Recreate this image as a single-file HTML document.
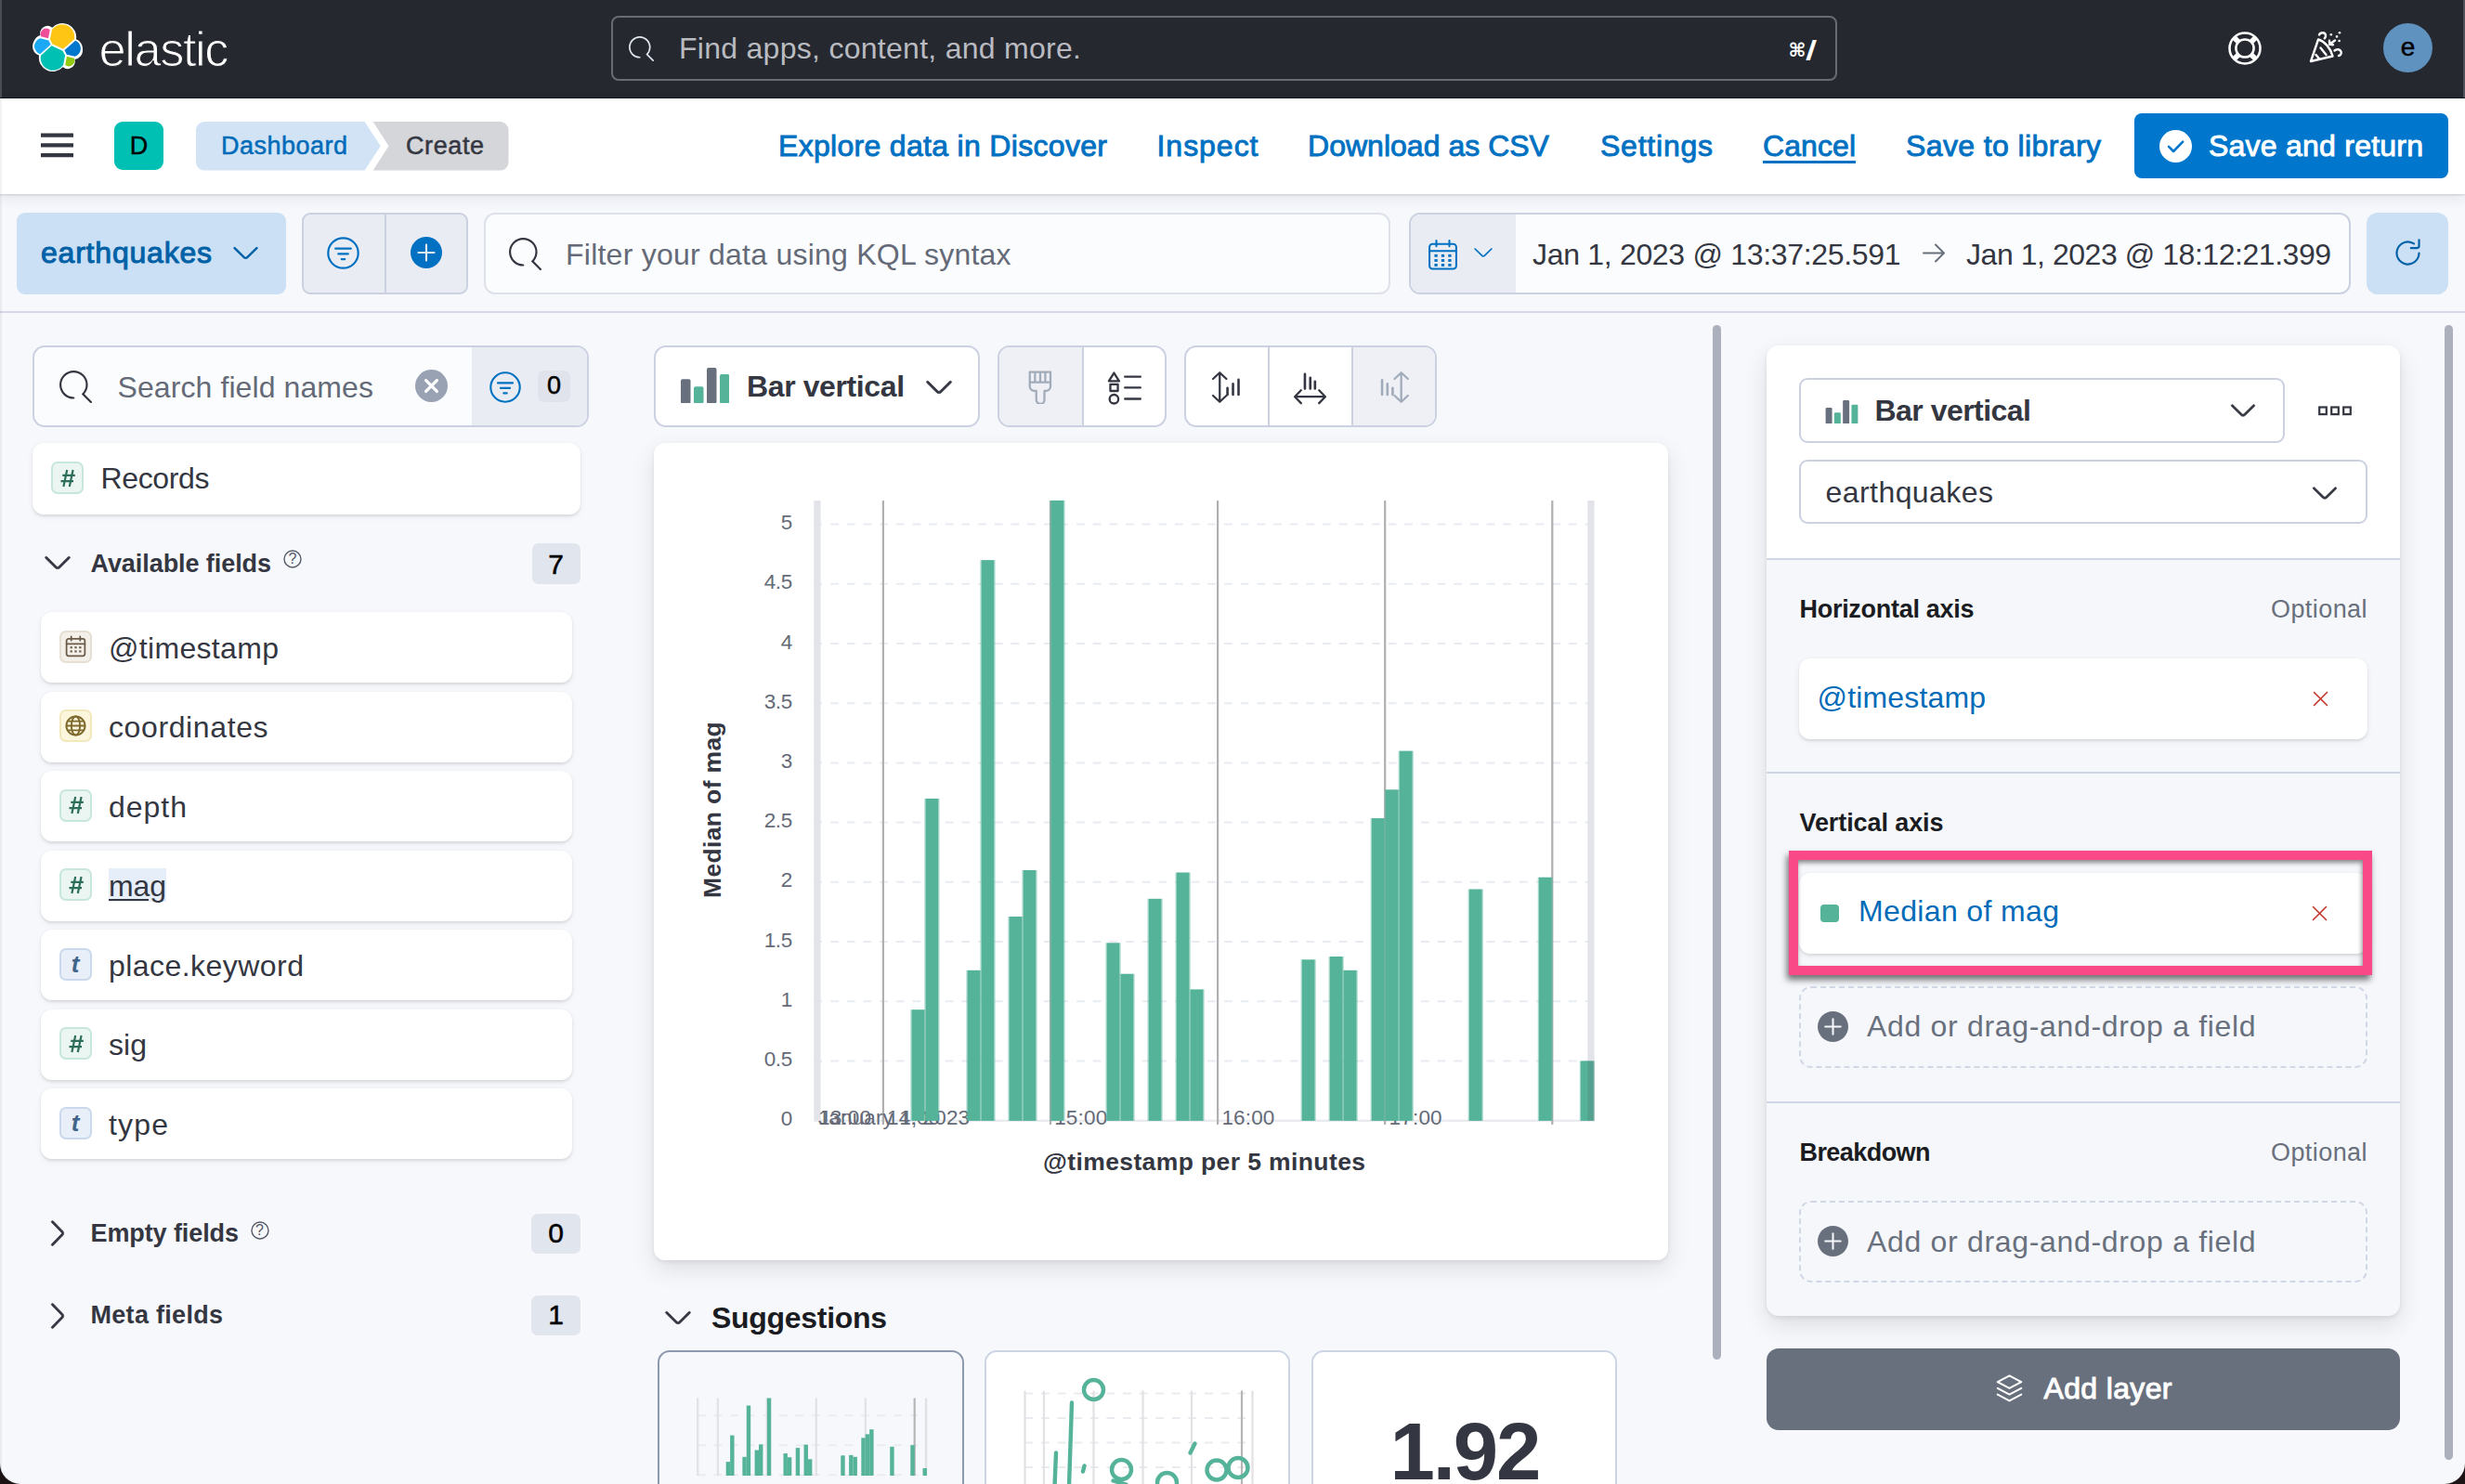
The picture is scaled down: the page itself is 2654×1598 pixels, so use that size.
<!DOCTYPE html>
<html lang="en"><head><meta charset="utf-8"><title>Lens - Elastic</title>
<style>
html,body{margin:0;padding:0;background:#1d1416;}
body{width:2654px;height:1598px;overflow:hidden;position:relative;font-family:"Liberation Sans",sans-serif;}
#app{position:absolute;left:0;top:0;width:2654px;height:1598px;overflow:hidden;background:#f7f8fc;border-radius:0 0 22px 22px;}
#app div,#app svg,#app span.t{position:absolute;box-sizing:border-box;}
span.t{white-space:pre;line-height:1;}
.card{background:#fff;border-radius:12px;box-shadow:0 2px 4px rgba(0,0,0,.07),0 4px 10px rgba(0,0,0,.05);}
.fld{background:#fff;border-radius:12px;box-shadow:0 1.5px 3px rgba(0,0,0,.10),0 3px 8px rgba(0,0,0,.04);}
.ico{border-radius:7px;border:2px solid;}
.badge{background:#e0e5ee;border-radius:7px;}
</style></head><body><div id="app">
<div style="left:0.0px;top:0.0px;width:2654.0px;height:105.6px;background:#25282f;border-bottom:1.2px solid #15181e;"></div>
<svg style="left:34.5px;top:24.2px;" width="54.0" height="54.0" viewBox="0 0 32 32"><g fill="none" fill-rule="evenodd">
<path fill="#FFF" d="M32 16.77a6.334 6.334 0 0 0-1.14-3.63 6.298 6.298 0 0 0-3.02-2.3 9.098 9.098 0 0 0-.873-5.497 9.05 9.05 0 0 0-3.99-3.852 9.006 9.006 0 0 0-5.498-.78 8.973 8.973 0 0 0-4.872 2.677 4.766 4.766 0 0 0-5.814-.16 4.802 4.802 0 0 0-1.698 2.275 4.82 4.82 0 0 0-.088 2.845A6.374 6.374 0 0 0 1.16 11.59 6.41 6.41 0 0 0 0 15.252a6.34 6.34 0 0 0 1.146 3.646 6.302 6.302 0 0 0 3.034 2.3 9.093 9.093 0 0 0 .866 5.493 9.044 9.044 0 0 0 3.985 3.852c1.7.834 3.62 1.109 5.486.784a8.964 8.964 0 0 0 4.868-2.663 4.766 4.766 0 0 0 5.8.147 4.802 4.802 0 0 0 1.694-2.268 4.82 4.82 0 0 0 .09-2.837 6.376 6.376 0 0 0 3.855-2.254A6.412 6.412 0 0 0 32 16.77"/>
<path fill="#FEC514" d="M12.58 13.787l7.002 3.211 7.066-6.213a7.849 7.849 0 0 0 .152-1.557c0-1.692-.539-3.34-1.54-4.704a7.897 7.897 0 0 0-4.02-2.869 7.866 7.866 0 0 0-4.932.086 7.9 7.9 0 0 0-3.92 3.007l-1.174 6.118 1.367 2.92-.001.001z"/>
<path fill="#00BFB3" d="M5.333 21.214a7.953 7.953 0 0 0 1.387 6.269 7.9 7.9 0 0 0 4.035 2.885 7.867 7.867 0 0 0 4.95-.097 7.9 7.9 0 0 0 3.92-3.033l1.166-6.102-1.555-2.985-7.03-3.211-6.873 6.274z"/>
<path fill="#F04E98" d="M5.29 9.055l4.8 1.137 1.05-5.475a3.796 3.796 0 0 0-4.538-.096 3.819 3.819 0 0 0-1.363 1.865 3.836 3.836 0 0 0 .052 2.569"/>
<path fill="#1BA9F5" d="M4.873 10.203a5.316 5.316 0 0 0-2.572 1.905 5.345 5.345 0 0 0-.027 6.234 5.315 5.315 0 0 0 2.558 1.924l6.733-6.108-1.236-2.65-5.456-1.305z"/>
<path fill="#93C90E" d="M20.873 27.24a3.737 3.737 0 0 0 4.484.086 3.759 3.759 0 0 0 1.347-1.838 3.776 3.776 0 0 0-.04-2.533l-4.797-1.126-.994 5.41z"/>
<path fill="#07C" d="M21.848 20.563l5.28 1.238a5.34 5.34 0 0 0 2.622-1.938 5.37 5.37 0 0 0 1.017-3.154 5.287 5.287 0 0 0-.936-3.03 5.26 5.26 0 0 0-2.493-1.938l-6.906 6.07 1.416 2.752z"/>
</g></svg>
<span class="t" style="left:106.5px;top:27.1px;font-size:52.5px;color:#fff;letter-spacing:-1.47px;-webkit-text-stroke:1.1px #25282f;">elastic</span>
<div style="left:658.0px;top:17.0px;width:1320.0px;height:70.0px;border:2.2px solid #696b71;border-radius:8px;background:#25282f;"></div>
<svg style="left:677.0px;top:39.0px;fill:#dfe5ef;" width="27.0" height="27.0" viewBox="0 0 16 16"><path d="m11.271 11.978 3.872 3.873a.502.502 0 0 0 .708 0 .502.502 0 0 0 0-.708l-3.565-3.564c2.38-2.747 2.267-6.923-.342-9.532-2.73-2.73-7.17-2.73-9.898 0-2.728 2.729-2.728 7.17 0 9.9a6.955 6.955 0 0 0 4.949 2.05.5.5 0 0 0 0-1 5.96 5.96 0 0 1-4.242-1.757 6.01 6.01 0 0 1 0-8.486 6.004 6.004 0 0 1 8.484 0 6.01 6.01 0 0 1 0 8.486.5.5 0 0 0-.034.738Z"/></svg>
<span class="t" style="left:731.0px;top:35.9px;font-size:32px;color:#b9bbc1;letter-spacing:0.28px;">Find apps, content, and more.</span>
<span class="t" style="left:1925.5px;top:44.4px;font-size:20.5px;color:#fff;font-weight:700;font-family:'DejaVu Sans',sans-serif;">&#8984;</span>
<span class="t" style="left:1945.8px;top:40.3px;font-size:28.5px;color:#fff;font-weight:700;-webkit-text-stroke:0.8px #fff;transform:skewX(-8deg);">/</span>
<svg style="left:2398.5px;top:33.5px;" width="36.0" height="36.0" viewBox="0 0 36 36"><g fill="none" stroke="#fff"><circle cx="18" cy="18" r="16.5" stroke-width="2.5"/><circle cx="18" cy="18" r="9.6" stroke-width="2.5"/><path d="M6.7 6.7l4.6 4.6M29.300 6.700l-4.600 4.600M6.700 29.300l4.600-4.600M29.300 29.300l-4.600-4.600" stroke-width="5.6"/></g></svg>
<svg style="left:2486.0px;top:32.5px;" width="37.0" height="36.0" viewBox="0 0 37 36"><g fill="none" stroke="#fff" stroke-width="2.4" stroke-linejoin="round" stroke-linecap="round"><path d="M2 33 10 9.500C17 11.500 23 18.500 25.500 27.500z"/><path d="M12.500 18.500l6 7.500M7.500 26l3.800 4.500"/><path d="M11 4.500c1.500-3 6.500-3 7 .5.300 1.500-.400 2.500-1.200 3.300"/><path d="M28 10.500l-5.800 4.300M22 10.800l.200 4 3.800.400"/><path d="M27.500 21.500c2.500-2 6-1.500 7 1 .800 2-.500 4-2.500 4.500"/></g><g fill="#fff"><circle cx="23.800" cy="4.200" r="1.300"/><circle cx="33" cy="2.200" r="1.300"/><circle cx="30" cy="6.400" r="1.300"/><circle cx="32.600" cy="11" r="1.300"/></g></svg>
<div style="left:2565.8px;top:24.7px;width:53.5px;height:53.5px;background:#6092c0;border-radius:50%;"></div>
<span class="t" style="left:2584.7px;top:36.9px;font-size:28px;color:#000;-webkit-text-stroke:0.5px #000;">e</span>
<div style="left:0.0px;top:106.0px;width:2654.0px;height:103.0px;background:#fff;box-shadow:0 1px 2px rgba(60,70,110,.20),0 5px 13px rgba(60,70,110,.10);z-index:3;"></div>
<div style="left:0;top:0;width:2654px;height:1598px;z-index:4;">
<svg style="left:44.0px;top:143.0px;" width="36.0" height="28.0" viewBox="0 0 36 28"><path fill="#343741" d="M0 .5h35v4.300H0zM0 11.200h35v4.300H0zM0 21.900h35v4.300H0z"/></svg>
<div style="left:123.0px;top:131.0px;width:53.0px;height:52.3px;background:#00bfb3;border-radius:9px;"></div>
<span class="t" style="left:139.8px;top:144.1px;font-size:27px;color:#000;-webkit-text-stroke:0.4px #000;">D</span>
<svg style="left:211.3px;top:131.0px;" width="340.0" height="53.0" viewBox="0 0 340 53"><path fill="#d5d6da" d="M190.600 0H327.500a9 9 0 0 1 9 9v34.600a9 9 0 0 1-9 9H190.600L207.500 26.300z"/><path fill="#d2e3f5" d="M9 0h172.600l17.100 26.300L181.600 52.600H9a9 9 0 0 1-9-9V9a9 9 0 0 1 9-9z"/></svg>
<span class="t" style="left:238.0px;top:143.6px;font-size:27px;color:#006bb8;letter-spacing:0.49px;-webkit-text-stroke:0.5px #006bb8;">Dashboard</span>
<span class="t" style="left:437.0px;top:143.6px;font-size:27px;color:#343741;letter-spacing:0.59px;-webkit-text-stroke:0.5px #343741;">Create</span>
<span class="t" style="left:838.0px;top:140.9px;font-size:32px;color:#0071c2;letter-spacing:0.31px;-webkit-text-stroke:0.9px #0071c2;">Explore data in Discover</span>
<span class="t" style="left:1245.5px;top:140.9px;font-size:32px;color:#0071c2;letter-spacing:0.97px;-webkit-text-stroke:0.9px #0071c2;">Inspect</span>
<span class="t" style="left:1408.0px;top:140.9px;font-size:32px;color:#0071c2;letter-spacing:0.02px;-webkit-text-stroke:0.9px #0071c2;">Download as CSV</span>
<span class="t" style="left:1723.0px;top:140.9px;font-size:32px;color:#0071c2;letter-spacing:0.77px;-webkit-text-stroke:0.9px #0071c2;">Settings</span>
<span class="t" style="left:1898.0px;top:140.9px;font-size:32px;color:#0071c2;letter-spacing:0.08px;-webkit-text-stroke:0.9px #0071c2;">Cancel</span>
<div style="left:1898.0px;top:173.0px;width:100.0px;height:2.5px;background:#0071c2;"></div>
<span class="t" style="left:2052.0px;top:140.9px;font-size:32px;color:#0071c2;letter-spacing:0.39px;-webkit-text-stroke:0.9px #0071c2;">Save to library</span>
<div style="left:2298.0px;top:122.0px;width:338.0px;height:70.0px;background:#0077cc;border-radius:8px;"></div>
<svg style="left:2324.5px;top:139.5px;" width="35.0" height="35.0" viewBox="0 0 16 16"><circle cx="8" cy="8" r="8" fill="#fff"/><path d="M4.6 8.2l2.3 2.3 4.6-4.7" fill="none" stroke="#0077cc" stroke-width="1.2" stroke-linecap="round" stroke-linejoin="round"/></svg>
<span class="t" style="left:2378.0px;top:140.9px;font-size:32px;color:#fff;letter-spacing:0.24px;-webkit-text-stroke:0.9px #fff;">Save and return</span>
</div>
<div style="left:0.0px;top:209.0px;width:2654.0px;height:128.0px;background:#f7f8fc;border-bottom:2px solid #d3dae6;"></div>
<div style="left:18.0px;top:229.0px;width:290.0px;height:88.0px;background:#cce0f5;border-radius:9px;"></div>
<span class="t" style="left:44.0px;top:255.9px;font-size:32px;color:#0061a6;letter-spacing:0.79px;-webkit-text-stroke:1.0px #0061a6;">earthquakes</span>
<svg style="left:247.0px;top:255.0px;fill:#0061a6;" width="35.0" height="35.0" viewBox="0 0 16 16"><path d="M13.069 5.157 8.384 9.768a.546.546 0 0 1-.768 0L2.93 5.158a.552.552 0 0 0-.771 0 .53.53 0 0 0 0 .759l4.684 4.61c.641.631 1.672.63 2.312 0l4.684-4.61a.53.53 0 0 0 0-.76.552.552 0 0 0-.771 0Z"/></svg>
<div style="left:325.0px;top:229.0px;width:179.0px;height:88.0px;background:#e9edf3;border:2px solid #cbd1e1;border-radius:9px;"></div>
<div style="left:413.5px;top:230.0px;width:2.0px;height:86.0px;background:#cbd1e1;"></div>
<svg style="left:352.0px;top:255.0px;" width="35.0" height="35.0" viewBox="0 0 16 16"><circle cx="8" cy="8" r="7.4" fill="none" stroke="#0071c2" stroke-width="1"/><path d="M4.2 5.8h7.6M5.6 8.4h4.8M7.2 11h1.6" stroke="#0071c2" stroke-width="1" stroke-linecap="round" fill="none"/></svg>
<svg style="left:442.0px;top:255.0px;fill:#0071c2;" width="34.0" height="34.0" viewBox="0 0 16 16"><path d="M8 0a8 8 0 1 1 0 16A8 8 0 0 1 8 0Zm0 3.5a.5.5 0 0 0-.5.5v3.5H4a.5.5 0 0 0 0 1h3.5V12a.5.5 0 1 0 1 0V8.5H12a.5.5 0 1 0 0-1H8.5V4a.5.5 0 0 0-.5-.5Z"/></svg>
<div style="left:521.0px;top:229.0px;width:976.0px;height:88.0px;background:#fbfcfd;border:2px solid #dde1ea;border-radius:12px;"></div>
<svg style="left:548.0px;top:256.0px;fill:#343741;" width="35.0" height="35.0" viewBox="0 0 16 16"><path d="m11.271 11.978 3.872 3.873a.502.502 0 0 0 .708 0 .502.502 0 0 0 0-.708l-3.565-3.564c2.38-2.747 2.267-6.923-.342-9.532-2.73-2.73-7.17-2.73-9.898 0-2.728 2.729-2.728 7.17 0 9.9a6.955 6.955 0 0 0 4.949 2.05.5.5 0 0 0 0-1 5.96 5.96 0 0 1-4.242-1.757 6.01 6.01 0 0 1 0-8.486 6.004 6.004 0 0 1 8.484 0 6.01 6.01 0 0 1 0 8.486.5.5 0 0 0-.034.738Z"/></svg>
<span class="t" style="left:609.0px;top:258.1px;font-size:32px;color:#646a77;letter-spacing:0.24px;">Filter your data using KQL syntax</span>
<div style="left:1516.5px;top:229.0px;width:1014.2px;height:88.0px;background:#fbfcfd;border:2px solid #cbd1e1;border-radius:12px;overflow:hidden;"><div style="left:0;top:0;width:113px;height:88px;background:#e9edf3;"></div></div>
<svg style="left:1537.0px;top:257.0px;" width="33.0" height="35.0" viewBox="0 0 16 17"><g fill="none" stroke="#0071c2" stroke-width="1"><rect x="1" y="2.8" width="14" height="13" rx="1.6"/><path d="M1 6.4h14M4.6 1v3M11.4 1v3" stroke-linecap="round"/></g><g fill="#0071c2"><rect x="3.6" y="8.2" width="1.6" height="1.4"/><rect x="7.2" y="8.2" width="1.6" height="1.4"/><rect x="10.8" y="8.2" width="1.6" height="1.4"/><rect x="3.6" y="10.7" width="1.6" height="1.4"/><rect x="7.2" y="10.7" width="1.6" height="1.4"/><rect x="10.8" y="10.7" width="1.6" height="1.4"/><rect x="3.6" y="13.1" width="1.6" height="1.4"/><rect x="7.2" y="13.1" width="1.6" height="1.4"/><rect x="10.8" y="13.1" width="1.6" height="1.4"/></g></svg>
<svg style="left:1584.0px;top:259.0px;fill:#0071c2;" width="26.0" height="26.0" viewBox="0 0 16 16"><path d="M13.069 5.157 8.384 9.768a.546.546 0 0 1-.768 0L2.93 5.158a.552.552 0 0 0-.771 0 .53.53 0 0 0 0 .759l4.684 4.61c.641.631 1.672.63 2.312 0l4.684-4.61a.53.53 0 0 0 0-.76.552.552 0 0 0-.771 0Z"/></svg>
<span class="t" style="left:1650.0px;top:257.5px;font-size:32px;color:#343741;letter-spacing:-0.31px;">Jan 1, 2023 @ 13:37:25.591</span>
<svg style="left:2070.0px;top:261.0px;" width="25.0" height="23.0" viewBox="0 0 25 23"><path d="M1 11.5h22M14 2.5l9 9-9 9" fill="none" stroke="#69707d" stroke-width="2" stroke-linecap="round" stroke-linejoin="round"/></svg>
<span class="t" style="left:2117.0px;top:257.5px;font-size:32px;color:#343741;letter-spacing:-0.45px;">Jan 1, 2023 @ 18:12:21.399</span>
<div style="left:2548.0px;top:229.0px;width:88.0px;height:88.0px;background:#cce0f5;border-radius:12px;"></div>
<svg style="left:2575.0px;top:255.0px;fill:#0061a6;" width="35.0" height="35.0" viewBox="0 0 16 16"><path d="M11.228 2.942a.5.5 0 1 1-.538.842A5 5 0 1 0 13 8a.5.5 0 1 1 1 0 6 6 0 1 1-2.772-5.058ZM14 1.5v3A1.5 1.5 0 0 1 12.500 6h-3a.5.5 0 0 1 0-1h3a.5.5 0 0 0 .5-.5v-3a.5.5 0 1 1 1 0Z"/></svg>
<div style="left:35.1px;top:372.3px;width:599.2px;height:88.0px;background:#fbfcfd;border:2px solid #cbd1e1;border-radius:13px;overflow:hidden;"><div style="left:471px;top:-2px;width:130px;height:90px;background:#e9edf3;"></div></div>
<svg style="left:64.0px;top:398.5px;fill:#343741;" width="35.0" height="35.0" viewBox="0 0 16 16"><path d="m11.271 11.978 3.872 3.873a.502.502 0 0 0 .708 0 .502.502 0 0 0 0-.708l-3.565-3.564c2.38-2.747 2.267-6.923-.342-9.532-2.73-2.73-7.17-2.73-9.898 0-2.728 2.729-2.728 7.17 0 9.9a6.955 6.955 0 0 0 4.949 2.05.5.5 0 0 0 0-1 5.96 5.96 0 0 1-4.242-1.757 6.01 6.01 0 0 1 0-8.486 6.004 6.004 0 0 1 8.484 0 6.01 6.01 0 0 1 0 8.486.5.5 0 0 0-.034.738Z"/></svg>
<span class="t" style="left:126.5px;top:401.4px;font-size:32px;color:#646a77;letter-spacing:0.09px;">Search field names</span>
<svg style="left:447.0px;top:398.0px;" width="35.0" height="35.0" viewBox="0 0 16 16"><circle cx="8" cy="8" r="8" fill="#98a2b3"/><path d="M5.3 5.3l5.4 5.4M10.7 5.3l-5.4 5.4" stroke="#fff" stroke-width="1.5" stroke-linecap="round"/></svg>
<svg style="left:526.5px;top:400.0px;" width="34.0" height="34.0" viewBox="0 0 16 16"><circle cx="8" cy="8" r="7.4" fill="none" stroke="#0071c2" stroke-width="1"/><path d="M4.2 5.8h7.6M5.6 8.4h4.8M7.2 11h1.6" stroke="#0071c2" stroke-width="1" stroke-linecap="round" fill="none"/></svg>
<div style="left:579.0px;top:398.5px;width:35.0px;height:34.0px;background:#e0e3ec;border-radius:7px;"></div>
<span class="t" style="left:589.0px;top:402.1px;font-size:27px;color:#000;-webkit-text-stroke:0.5px #000;">0</span>
<div class=fld style="left:35.0px;top:477.0px;width:590.0px;height:76.5px;"></div>
<div class=ico style="left:55.0px;top:497.3px;width:35.0px;height:35.0px;background:#ebf6f2;border-color:#c8e7db;"></div>
<svg style="left:63.5px;top:504.8px;" width="18.0" height="20.0" viewBox="0 0 18 20"><path d="M8.200 1 4.400 19M14.600 1 10.800 19M3.300 6.800h13.500M1.500 13.200h13.500" stroke="#2d6e5a" stroke-width="2.2" fill="none"/></svg>
<span class="t" style="left:108.5px;top:499.4px;font-size:32px;color:#343741;letter-spacing:-0.36px;">Records</span>
<svg style="left:43.6px;top:588.0px;fill:#343741;stroke:#343741;stroke-width:.25;" width="36.0" height="36.0" viewBox="0 0 16 16"><path d="M13.069 5.157 8.384 9.768a.546.546 0 0 1-.768 0L2.93 5.158a.552.552 0 0 0-.771 0 .53.53 0 0 0 0 .759l4.684 4.61c.641.631 1.672.63 2.312 0l4.684-4.61a.53.53 0 0 0 0-.76.552.552 0 0 0-.771 0Z"/></svg>
<span class="t" style="left:97.5px;top:593.6px;font-size:27px;color:#343741;font-weight:700;letter-spacing:-0.07px;">Available fields</span>
<svg style="left:305.0px;top:592.0px;" width="20.0" height="20.0" viewBox="0 0 20 20"><circle cx="10" cy="10" r="9" fill="none" stroke="#535966" stroke-width="1.4"/></svg>
<span class="t" style="left:310.5px;top:594.0px;font-size:16px;color:#535966;">?</span>
<div class=badge style="left:572.5px;top:585.0px;width:52.5px;height:44.0px;"></div>
<span class="t" style="left:590.2px;top:592.6px;font-size:30px;color:#000;-webkit-text-stroke:0.5px #000;">7</span>
<div class=fld style="left:44.0px;top:659.0px;width:572.0px;height:76.1px;"></div>
<div class=ico style="left:64.0px;top:678.8px;width:35.0px;height:35.0px;background:#f3efe9;border-color:#e6dfd3;"></div>
<svg style="left:70.0px;top:683.8px;" width="23.0" height="24.0" viewBox="0 0 16 17"><g fill="none" stroke="#6a5c49" stroke-width="1.25"><rect x="1" y="2.8" width="14" height="13" rx="1.6"/><path d="M1 6.6h14M4.6 1v3M11.4 1v3" stroke-linecap="round"/></g><g fill="#6a5c49"><rect x="3.8" y="8.6" width="1.6" height="1.5"/><rect x="7.2" y="8.6" width="1.6" height="1.5"/><rect x="10.6" y="8.6" width="1.6" height="1.5"/><rect x="3.8" y="11.6" width="1.6" height="1.5"/><rect x="7.2" y="11.6" width="1.6" height="1.5"/><rect x="10.6" y="11.6" width="1.6" height="1.5"/></g></svg>
<span class="t" style="left:117.0px;top:681.7px;font-size:32px;color:#343741;letter-spacing:0.32px;">@timestamp</span>
<div class=fld style="left:44.0px;top:744.5px;width:572.0px;height:76.1px;"></div>
<div class=ico style="left:64.0px;top:764.3px;width:35.0px;height:35.0px;background:#fcf6dd;border-color:#f2e8bd;"></div>
<svg style="left:70.0px;top:770.3px;" width="23.0" height="23.0" viewBox="0 0 16 16"><g fill="none" stroke="#7d6a2c" stroke-width="1.35"><circle cx="8" cy="8" r="7"/><ellipse cx="8" cy="8" rx="3.2" ry="7"/><path d="M1 8h14M2 4.6h12M2 11.4h12"/></g></svg>
<span class="t" style="left:117.0px;top:767.2px;font-size:32px;color:#343741;letter-spacing:0.61px;">coordinates</span>
<div class=fld style="left:44.0px;top:830.0px;width:572.0px;height:76.1px;"></div>
<div class=ico style="left:64.0px;top:849.8px;width:35.0px;height:35.0px;background:#ebf6f2;border-color:#c8e7db;"></div>
<svg style="left:72.5px;top:857.3px;" width="18.0" height="20.0" viewBox="0 0 18 20"><path d="M8.200 1 4.400 19M14.600 1 10.800 19M3.300 6.800h13.500M1.500 13.200h13.500" stroke="#2d6e5a" stroke-width="2.2" fill="none"/></svg>
<span class="t" style="left:117.0px;top:852.7px;font-size:32px;color:#343741;letter-spacing:0.98px;">depth</span>
<div class=fld style="left:44.0px;top:915.5px;width:572.0px;height:76.1px;"></div>
<div class=ico style="left:64.0px;top:935.3px;width:35.0px;height:35.0px;background:#ebf6f2;border-color:#c8e7db;"></div>
<svg style="left:72.5px;top:942.8px;" width="18.0" height="20.0" viewBox="0 0 18 20"><path d="M8.200 1 4.400 19M14.600 1 10.800 19M3.300 6.800h13.500M1.500 13.200h13.500" stroke="#2d6e5a" stroke-width="2.2" fill="none"/></svg>
<div style="left:116.8px;top:934.9px;width:62.0px;height:36.3px;background:#e6eefa;"></div>
<div style="left:117.0px;top:967.8px;width:42.8px;height:2.2px;background:#343741;"></div>
<span class="t" style="left:117.0px;top:938.2px;font-size:32px;color:#343741;letter-spacing:-0.12px;">mag</span>
<div class=fld style="left:44.0px;top:1001.0px;width:572.0px;height:76.1px;"></div>
<div class=ico style="left:64.0px;top:1020.8px;width:35.0px;height:35.0px;background:#e8eff8;border-color:#cbd9ec;"></div>
<span class="t" style="left:76.7px;top:1025.3px;font-size:26px;color:#41648a;font-weight:700;font-style:italic;">t</span>
<span class="t" style="left:117.0px;top:1023.7px;font-size:32px;color:#343741;letter-spacing:0.45px;">place.keyword</span>
<div class=fld style="left:44.0px;top:1086.5px;width:572.0px;height:76.1px;"></div>
<div class=ico style="left:64.0px;top:1106.3px;width:35.0px;height:35.0px;background:#ebf6f2;border-color:#c8e7db;"></div>
<svg style="left:72.5px;top:1113.8px;" width="18.0" height="20.0" viewBox="0 0 18 20"><path d="M8.200 1 4.400 19M14.600 1 10.800 19M3.300 6.800h13.500M1.500 13.200h13.500" stroke="#2d6e5a" stroke-width="2.2" fill="none"/></svg>
<span class="t" style="left:117.0px;top:1109.2px;font-size:32px;color:#343741;letter-spacing:0.05px;">sig</span>
<div class=fld style="left:44.0px;top:1172.0px;width:572.0px;height:76.1px;"></div>
<div class=ico style="left:64.0px;top:1191.8px;width:35.0px;height:35.0px;background:#e8eff8;border-color:#cbd9ec;"></div>
<span class="t" style="left:76.7px;top:1196.3px;font-size:26px;color:#41648a;font-weight:700;font-style:italic;">t</span>
<span class="t" style="left:117.0px;top:1194.7px;font-size:32px;color:#343741;letter-spacing:1.17px;">type</span>
<svg style="left:43.5px;top:1310.0px;fill:#343741;stroke:#343741;stroke-width:.25;" width="36.0" height="36.0" viewBox="0 0 16 16"><path d="M5.157 13.069 9.768 8.384a.546.546 0 0 0 0-.768L5.158 2.93a.552.552 0 0 1 0-.771.53.53 0 0 1 .759 0l4.61 4.684c.631.641.63 1.672 0 2.312l-4.61 4.684a.53.53 0 0 1-.76 0 .552.552 0 0 1 0-.771Z"/></svg>
<span class="t" style="left:97.5px;top:1314.6px;font-size:27px;color:#343741;font-weight:700;letter-spacing:-0.10px;">Empty fields</span>
<svg style="left:269.5px;top:1315.0px;" width="20.0" height="20.0" viewBox="0 0 20 20"><circle cx="10" cy="10" r="9" fill="none" stroke="#535966" stroke-width="1.4"/></svg>
<span class="t" style="left:275.0px;top:1317.0px;font-size:16px;color:#535966;">?</span>
<div class=badge style="left:572.0px;top:1306.5px;width:52.5px;height:43.0px;"></div>
<span class="t" style="left:590.2px;top:1313.1px;font-size:30px;color:#000;-webkit-text-stroke:0.5px #000;">0</span>
<svg style="left:43.5px;top:1398.5px;fill:#343741;stroke:#343741;stroke-width:.25;" width="36.0" height="36.0" viewBox="0 0 16 16"><path d="M5.157 13.069 9.768 8.384a.546.546 0 0 0 0-.768L5.158 2.93a.552.552 0 0 1 0-.771.53.53 0 0 1 .759 0l4.61 4.684c.631.641.63 1.672 0 2.312l-4.61 4.684a.53.53 0 0 1-.76 0 .552.552 0 0 1 0-.771Z"/></svg>
<span class="t" style="left:97.5px;top:1403.1px;font-size:27px;color:#343741;font-weight:700;letter-spacing:0.30px;">Meta fields</span>
<div class=badge style="left:572.0px;top:1394.5px;width:52.5px;height:43.0px;"></div>
<span class="t" style="left:590.2px;top:1401.1px;font-size:30px;color:#000;-webkit-text-stroke:0.5px #000;">1</span>
<div style="left:704.3px;top:372.3px;width:351.2px;height:88.0px;background:#fff;border:2px solid #cbd1e1;border-radius:13px;"></div>
<svg style="left:732.5px;top:395.8px;" width="52.5" height="38.5" viewBox="0 0 30 22"><rect x="0" y="7" width="6" height="15" rx="1" fill="#69707d"/><rect x="8" y="11.5" width="6" height="10.500" rx="1" fill="#54b399"/><rect x="16" y="0" width="6" height="22" rx="1" fill="#69707d"/><rect x="24" y="4" width="6" height="18" rx="1" fill="#54b399"/></svg>
<span class="t" style="left:804.0px;top:400.4px;font-size:32px;color:#343741;font-weight:700;letter-spacing:-0.39px;">Bar vertical</span>
<svg style="left:993.0px;top:398.5px;fill:#343741;stroke:#343741;stroke-width:.3;" width="36.0" height="36.0" viewBox="0 0 16 16"><path d="M13.069 5.157 8.384 9.768a.546.546 0 0 1-.768 0L2.93 5.158a.552.552 0 0 0-.771 0 .53.53 0 0 0 0 .759l4.684 4.61c.641.631 1.672.63 2.312 0l4.684-4.61a.53.53 0 0 0 0-.76.552.552 0 0 0-.771 0Z"/></svg>
<div style="left:1074.0px;top:372.3px;width:181.5px;height:88.0px;background:#fff;border:2px solid #cbd1e1;border-radius:13px;overflow:hidden;"><div style="left:0;top:0;width:90px;height:88px;background:#eef0f6;"></div><div style="left:89px;top:0;width:2px;height:88px;background:#cbd1e1;"></div></div>
<svg style="left:1102.0px;top:399.0px;" width="36.0" height="36.0" viewBox="0 0 16 16"><g fill="none" stroke="#a2abba" stroke-width="1" stroke-linejoin="round"><path d="M3 .700h9.900v6.900c0 1.100-.800 2-1.900 2.100H10v4.300a1.950 1.950 0 0 1-3.900 0V9.700H4.900C3.800 9.600 3 8.700 3 7.600z"/><path d="M3 5.650h9.900M5.500 .700v4.900M8 .700v4.900M10.400 .700v4.900"/></g></svg>
<svg style="left:1192.0px;top:399.0px;" width="37.0" height="37.0" viewBox="0 0 16 16"><g fill="none" stroke="#343741" stroke-width="1" stroke-linecap="round" stroke-linejoin="round"><path d="M3.200 1.100 5.600 4.900H.800z"/><rect x="1.500" y="6.400" width="3.500" height="3.100"/><circle cx="3.200" cy="13.300" r="2.050"/><path d="M8.300 2.900h7.200M8.300 7.950h7.200M8.300 13.200h7.200"/></g></svg>
<div style="left:1274.5px;top:372.3px;width:272.0px;height:88.0px;background:#fff;border:2px solid #cbd1e1;border-radius:13px;overflow:hidden;"><div style="left:179px;top:0;width:93px;height:88px;background:#eef0f6;"></div><div style="left:88.500px;top:0;width:2px;height:88px;background:#cbd1e1;"></div><div style="left:178.500px;top:0;width:2px;height:88px;background:#cbd1e1;"></div></div>
<svg style="left:1302.0px;top:399.0px;" width="36.0" height="36.0" viewBox="0 0 16 16"><g fill="none" stroke="#343741" stroke-width="1" stroke-linecap="round" stroke-linejoin="round"><path d="M5 1.700v12.600M1.800 4 5 1l3.200 3M1.800 12 5 15l3.200-3"/><path d="M8.700 8.300v3.200M11.350 6.350v5.150M14 4.400v7.100" stroke-width="1.15"/></g></svg>
<svg style="left:1392.0px;top:399.0px;" width="37.0" height="37.0" viewBox="0 0 16 16"><g fill="none" stroke="#343741" stroke-width="1" stroke-linecap="round" stroke-linejoin="round"><path d="M1.400 12.200h13.200M3.800 9.200.9 12.200l2.900 3M12.200 9.200l2.900 3-2.900 3"/><path d="M5.600 1.700v6.700M8.100 3.400v5M10.300 5.100v3.300" stroke-width="1.15"/></g></svg>
<svg style="left:1483.0px;top:399.0px;" width="36.0" height="36.0" viewBox="0 0 16 16"><g fill="none" stroke="#a2abba" stroke-width="1" stroke-linecap="round" stroke-linejoin="round"><path d="M11.400 1.700v12.600M8.200 4 11.400 1l3.200 3M8.200 12l3.200 3 3.200-3"/><path d="M2.250 4.600v6.900M4.800 6.350v5.150M7.300 8.300v3.200" stroke-width="1.15"/></g></svg>
<div class=card style="left:704.3px;top:477.0px;width:1091.9px;height:880.0px;box-shadow:0 2px 5px rgba(0,0,0,.07),0 10px 26px rgba(0,0,0,.10);"></div>
<div style="left:1844.0px;top:350.0px;width:9.0px;height:1114.3px;background:#acb0bd;border-radius:5px;"></div>
<svg style="left:704.5px;top:477px;" width="1091.5" height="880" viewBox="704.5 477 1091.5 880"><path d="M876 1142.4H1716" stroke="#e8ebf1" stroke-width="2" stroke-dasharray="8.83 8.83" fill="none"/><path d="M876 1078.2H1716" stroke="#e8ebf1" stroke-width="2" stroke-dasharray="8.83 8.83" fill="none"/><path d="M876 1014.0H1716" stroke="#e8ebf1" stroke-width="2" stroke-dasharray="8.83 8.83" fill="none"/><path d="M876 949.8H1716" stroke="#e8ebf1" stroke-width="2" stroke-dasharray="8.83 8.83" fill="none"/><path d="M876 885.6H1716" stroke="#e8ebf1" stroke-width="2" stroke-dasharray="8.83 8.83" fill="none"/><path d="M876 821.4H1716" stroke="#e8ebf1" stroke-width="2" stroke-dasharray="8.83 8.83" fill="none"/><path d="M876 757.2H1716" stroke="#e8ebf1" stroke-width="2" stroke-dasharray="8.83 8.83" fill="none"/><path d="M876 693.0H1716" stroke="#e8ebf1" stroke-width="2" stroke-dasharray="8.83 8.83" fill="none"/><path d="M876 628.8H1716" stroke="#e8ebf1" stroke-width="2" stroke-dasharray="8.83 8.83" fill="none"/><path d="M876 564.6H1716" stroke="#e8ebf1" stroke-width="2" stroke-dasharray="8.83 8.83" fill="none"/><rect x="875.8" y="539" width="7.3" height="668.4" fill="#e2e4e9"/><rect x="1708.8" y="539" width="7.3" height="668.4" fill="#e2e4e9"/><rect x="875.8" y="1205.6" width="840.3" height="2.4" fill="#e9ebef"/><rect x="949.3" y="539" width="2.2" height="672" fill="#b0b0b0"/><rect x="1129.4" y="539" width="2.2" height="672" fill="#b0b0b0"/><rect x="1309.5" y="539" width="2.2" height="672" fill="#b0b0b0"/><rect x="1489.6" y="539" width="2.2" height="672" fill="#b0b0b0"/><rect x="1669.7" y="539" width="2.2" height="672" fill="#b0b0b0"/></svg>
<span class="t" style="left:840.7px;top:1194.2px;font-size:22.5px;color:#646a77;">0</span>
<span class="t" style="left:822.7px;top:1130.0px;font-size:22.5px;color:#646a77;letter-spacing:-0.39px;">0.5</span>
<span class="t" style="left:840.7px;top:1065.8px;font-size:22.5px;color:#646a77;">1</span>
<span class="t" style="left:822.7px;top:1001.6px;font-size:22.5px;color:#646a77;letter-spacing:-0.39px;">1.5</span>
<span class="t" style="left:840.7px;top:937.4px;font-size:22.5px;color:#646a77;">2</span>
<span class="t" style="left:822.7px;top:873.2px;font-size:22.5px;color:#646a77;letter-spacing:-0.39px;">2.5</span>
<span class="t" style="left:840.7px;top:809.0px;font-size:22.5px;color:#646a77;">3</span>
<span class="t" style="left:822.7px;top:744.8px;font-size:22.5px;color:#646a77;letter-spacing:-0.39px;">3.5</span>
<span class="t" style="left:840.7px;top:680.6px;font-size:22.5px;color:#646a77;">4</span>
<span class="t" style="left:822.7px;top:616.4px;font-size:22.5px;color:#646a77;letter-spacing:-0.39px;">4.5</span>
<span class="t" style="left:840.7px;top:552.2px;font-size:22.5px;color:#646a77;">5</span>
<span class="t" style="left:881.0px;top:1193.3px;font-size:22.5px;color:#646a77;letter-spacing:0.17px;">13:00</span>
<span class="t" style="left:881.0px;top:1193.3px;font-size:22.5px;color:#646a77;letter-spacing:0.12px;">January 1, 2023</span>
<span class="t" style="left:955.0px;top:1193.3px;font-size:22.5px;color:#646a77;letter-spacing:0.17px;">14:00</span>
<span class="t" style="left:1135.2px;top:1193.3px;font-size:22.5px;color:#646a77;letter-spacing:0.17px;">15:00</span>
<span class="t" style="left:1315.4px;top:1193.3px;font-size:22.5px;color:#646a77;letter-spacing:0.17px;">16:00</span>
<span class="t" style="left:1495.6px;top:1193.3px;font-size:22.5px;color:#646a77;letter-spacing:0.17px;">17:00</span>
<svg style="left:704.5px;top:477px;" width="1091.5" height="880" viewBox="704.5 477 1091.5 880"><rect x="980.97" y="1087.2" width="13.91" height="119.7" fill="#54b399"/><rect x="979.87" y="1087.2" width="1.1" height="119.7" fill="#54b399" fill-opacity=".5"/><rect x="994.88" y="1087.2" width="1.1" height="119.7" fill="#54b399" fill-opacity=".5"/><rect x="995.97" y="859.9" width="13.91" height="347.0" fill="#54b399"/><rect x="994.88" y="859.9" width="1.1" height="347.0" fill="#54b399" fill-opacity=".5"/><rect x="1009.88" y="859.9" width="1.1" height="347.0" fill="#54b399" fill-opacity=".5"/><rect x="1041.00" y="1044.8" width="13.91" height="162.1" fill="#54b399"/><rect x="1039.90" y="1044.8" width="1.1" height="162.1" fill="#54b399" fill-opacity=".5"/><rect x="1054.91" y="1044.8" width="1.1" height="162.1" fill="#54b399" fill-opacity=".5"/><rect x="1056.01" y="603.1" width="13.91" height="603.8" fill="#54b399"/><rect x="1054.91" y="603.1" width="1.1" height="603.8" fill="#54b399" fill-opacity=".5"/><rect x="1069.92" y="603.1" width="1.1" height="603.8" fill="#54b399" fill-opacity=".5"/><rect x="1086.02" y="987.0" width="13.91" height="219.9" fill="#54b399"/><rect x="1084.92" y="987.0" width="1.1" height="219.9" fill="#54b399" fill-opacity=".5"/><rect x="1099.93" y="987.0" width="1.1" height="219.9" fill="#54b399" fill-opacity=".5"/><rect x="1101.03" y="937.0" width="13.91" height="269.9" fill="#54b399"/><rect x="1099.93" y="937.0" width="1.1" height="269.9" fill="#54b399" fill-opacity=".5"/><rect x="1114.94" y="937.0" width="1.1" height="269.9" fill="#54b399" fill-opacity=".5"/><rect x="1131.05" y="538.9" width="13.91" height="668.0" fill="#54b399"/><rect x="1129.95" y="538.9" width="1.1" height="668.0" fill="#54b399" fill-opacity=".5"/><rect x="1144.96" y="538.9" width="1.1" height="668.0" fill="#54b399" fill-opacity=".5"/><rect x="1191.08" y="1015.3" width="13.91" height="191.6" fill="#54b399"/><rect x="1189.98" y="1015.3" width="1.1" height="191.6" fill="#54b399" fill-opacity=".5"/><rect x="1204.99" y="1015.3" width="1.1" height="191.6" fill="#54b399" fill-opacity=".5"/><rect x="1206.09" y="1048.7" width="13.91" height="158.2" fill="#54b399"/><rect x="1204.99" y="1048.7" width="1.1" height="158.2" fill="#54b399" fill-opacity=".5"/><rect x="1220.00" y="1048.7" width="1.1" height="158.2" fill="#54b399" fill-opacity=".5"/><rect x="1236.11" y="967.8" width="13.91" height="239.1" fill="#54b399"/><rect x="1235.01" y="967.8" width="1.1" height="239.1" fill="#54b399" fill-opacity=".5"/><rect x="1250.02" y="967.8" width="1.1" height="239.1" fill="#54b399" fill-opacity=".5"/><rect x="1266.12" y="939.5" width="13.91" height="267.4" fill="#54b399"/><rect x="1265.03" y="939.5" width="1.1" height="267.4" fill="#54b399" fill-opacity=".5"/><rect x="1280.03" y="939.5" width="1.1" height="267.4" fill="#54b399" fill-opacity=".5"/><rect x="1281.13" y="1065.4" width="13.91" height="141.5" fill="#54b399"/><rect x="1280.03" y="1065.4" width="1.1" height="141.5" fill="#54b399" fill-opacity=".5"/><rect x="1295.04" y="1065.4" width="1.1" height="141.5" fill="#54b399" fill-opacity=".5"/><rect x="1401.20" y="1033.3" width="13.91" height="173.6" fill="#54b399"/><rect x="1400.10" y="1033.3" width="1.1" height="173.6" fill="#54b399" fill-opacity=".5"/><rect x="1415.11" y="1033.3" width="1.1" height="173.6" fill="#54b399" fill-opacity=".5"/><rect x="1431.22" y="1030.0" width="13.91" height="176.8" fill="#54b399"/><rect x="1430.12" y="1030.0" width="1.1" height="176.8" fill="#54b399" fill-opacity=".5"/><rect x="1445.12" y="1030.0" width="1.1" height="176.8" fill="#54b399" fill-opacity=".5"/><rect x="1446.22" y="1044.8" width="13.91" height="162.1" fill="#54b399"/><rect x="1445.12" y="1044.8" width="1.1" height="162.1" fill="#54b399" fill-opacity=".5"/><rect x="1460.13" y="1044.8" width="1.1" height="162.1" fill="#54b399" fill-opacity=".5"/><rect x="1476.24" y="881.1" width="13.91" height="325.8" fill="#54b399"/><rect x="1475.14" y="881.1" width="1.1" height="325.8" fill="#54b399" fill-opacity=".5"/><rect x="1490.15" y="881.1" width="1.1" height="325.8" fill="#54b399" fill-opacity=".5"/><rect x="1491.25" y="850.3" width="13.91" height="356.6" fill="#54b399"/><rect x="1490.15" y="850.3" width="1.1" height="356.6" fill="#54b399" fill-opacity=".5"/><rect x="1505.16" y="850.3" width="1.1" height="356.6" fill="#54b399" fill-opacity=".5"/><rect x="1506.26" y="808.6" width="13.91" height="398.3" fill="#54b399"/><rect x="1505.16" y="808.6" width="1.1" height="398.3" fill="#54b399" fill-opacity=".5"/><rect x="1520.17" y="808.6" width="1.1" height="398.3" fill="#54b399" fill-opacity=".5"/><rect x="1581.30" y="957.5" width="13.91" height="249.4" fill="#54b399"/><rect x="1580.20" y="957.5" width="1.1" height="249.4" fill="#54b399" fill-opacity=".5"/><rect x="1595.21" y="957.5" width="1.1" height="249.4" fill="#54b399" fill-opacity=".5"/><rect x="1656.34" y="944.7" width="13.91" height="262.2" fill="#54b399"/><rect x="1655.24" y="944.7" width="1.1" height="262.2" fill="#54b399" fill-opacity=".5"/><rect x="1670.25" y="944.7" width="1.1" height="262.2" fill="#54b399" fill-opacity=".5"/><rect x="1701.37" y="1142.4" width="13.91" height="64.5" fill="#54b399"/><rect x="1700.27" y="1142.4" width="1.1" height="64.5" fill="#54b399" fill-opacity=".5"/><rect x="1715.28" y="1142.4" width="1.1" height="64.5" fill="#54b399" fill-opacity=".5"/><rect x="1708.8" y="1142.4" width="7.3" height="64.5" fill="#5d6470" fill-opacity=".22"/></svg>
<span class="t" style="left:1123.0px;top:1237.6px;font-size:26.5px;color:#343741;font-weight:700;letter-spacing:0.39px;">@timestamp per 5 minutes</span>
<div style="left:668.0px;top:852.0px;width:200.0px;height:40.0px;transform:rotate(-90deg);"><span class="t" id="ytitle" style="left:5px;top:6px;font-size:26.5px;font-weight:700;color:#343741;letter-spacing:0.35px;">Median of mag</span></div>
<svg style="left:712.0px;top:1401.0px;fill:#343741;stroke:#343741;stroke-width:.25;" width="36.0" height="36.0" viewBox="0 0 16 16"><path d="M13.069 5.157 8.384 9.768a.546.546 0 0 1-.768 0L2.93 5.158a.552.552 0 0 0-.771 0 .53.53 0 0 0 0 .759l4.684 4.61c.641.631 1.672.63 2.312 0l4.684-4.61a.53.53 0 0 0 0-.76.552.552 0 0 0-.771 0Z"/></svg>
<span class="t" style="left:766.0px;top:1403.4px;font-size:32px;color:#1a1c21;font-weight:700;letter-spacing:-0.30px;">Suggestions</span>
<div style="left:708.0px;top:1453.8px;width:329.5px;height:170.0px;background:#f7f8fc;border:2.5px solid #8e98ae;border-radius:13px;"></div>
<div style="left:1060.3px;top:1453.8px;width:329.2px;height:170.0px;background:#fff;border:2px solid #cdd4e4;border-radius:13px;"></div>
<div style="left:1411.8px;top:1453.8px;width:329.7px;height:170.0px;background:#fff;border:2px solid #cdd4e4;border-radius:13px;"></div>
<span class="t" style="left:1496.5px;top:1519.2px;font-size:87px;color:#343741;font-weight:700;letter-spacing:-2.11px;">1.92</span>
<svg style="left:708px;top:1454.5px;" width="329.5" height="143.5" viewBox="708 1454.5 329.5 143.5"><path d="M751 1587.8H998" stroke="#eaecf1" stroke-width="2" stroke-dasharray="8.8 8.8" fill="none"/><path d="M751 1555.8H998" stroke="#eaecf1" stroke-width="2" stroke-dasharray="8.8 8.8" fill="none"/><path d="M751 1523.8H998" stroke="#eaecf1" stroke-width="2" stroke-dasharray="8.8 8.8" fill="none"/><rect x="750" y="1505" width="2.4" height="83.5" fill="#e2e2e4"/><rect x="995.8" y="1505" width="2.4" height="83.5" fill="#e2e2e4"/><rect x="771.8" y="1505" width="2.2" height="83.5" fill="#e2e2e4"/><rect x="824.7" y="1505" width="2.2" height="83.5" fill="#e2e2e4"/><rect x="877.7" y="1505" width="2.2" height="83.5" fill="#e2e2e4"/><rect x="930.7" y="1505" width="2.2" height="83.5" fill="#e2e2e4"/><rect x="983.6" y="1505" width="2.2" height="83.5" fill="#b5b5b5"/><rect x="781.70" y="1573.6" width="4.41" height="14.9" fill="#54b399"/><rect x="786.12" y="1545.1" width="4.41" height="43.4" fill="#54b399"/><rect x="799.36" y="1568.3" width="4.41" height="20.2" fill="#54b399"/><rect x="803.77" y="1513.0" width="4.41" height="75.5" fill="#54b399"/><rect x="812.60" y="1561.0" width="4.41" height="27.5" fill="#54b399"/><rect x="817.01" y="1554.8" width="4.41" height="33.7" fill="#54b399"/><rect x="825.84" y="1505.0" width="4.41" height="83.5" fill="#54b399"/><rect x="843.49" y="1564.6" width="4.41" height="23.9" fill="#54b399"/><rect x="847.90" y="1568.7" width="4.41" height="19.8" fill="#54b399"/><rect x="856.73" y="1558.6" width="4.41" height="29.9" fill="#54b399"/><rect x="865.55" y="1555.1" width="4.41" height="33.4" fill="#54b399"/><rect x="869.97" y="1570.8" width="4.41" height="17.7" fill="#54b399"/><rect x="905.27" y="1566.8" width="4.41" height="21.7" fill="#54b399"/><rect x="914.10" y="1566.4" width="4.41" height="22.1" fill="#54b399"/><rect x="918.51" y="1568.3" width="4.41" height="20.2" fill="#54b399"/><rect x="927.34" y="1547.8" width="4.41" height="40.7" fill="#54b399"/><rect x="931.75" y="1543.9" width="4.41" height="44.6" fill="#54b399"/><rect x="936.16" y="1538.7" width="4.41" height="49.8" fill="#54b399"/><rect x="958.23" y="1557.3" width="4.41" height="31.2" fill="#54b399"/><rect x="980.30" y="1555.7" width="4.41" height="32.8" fill="#54b399"/><rect x="993.54" y="1580.5" width="4.41" height="8.0" fill="#54b399"/></svg>
<svg style="left:1060.5px;top:1454.5px;" width="329" height="143.5" viewBox="1060.5 1454.5 329 143.5"><path d="M1103 1500.0H1348.5" stroke="#e9ebef" stroke-width="2" stroke-dasharray="8.8 8.8" fill="none"/><path d="M1103 1526.5H1348.5" stroke="#e9ebef" stroke-width="2" stroke-dasharray="8.8 8.8" fill="none"/><path d="M1103 1553.0H1348.5" stroke="#e9ebef" stroke-width="2" stroke-dasharray="8.8 8.8" fill="none"/><path d="M1103 1579.5H1348.5" stroke="#e9ebef" stroke-width="2" stroke-dasharray="8.8 8.8" fill="none"/><rect x="1101.9" y="1497" width="2.2" height="110" fill="#e2e2e4"/><rect x="1122.4" y="1497" width="2.2" height="110" fill="#e2e2e4"/><rect x="1175.9" y="1497" width="2.2" height="110" fill="#e2e2e4"/><rect x="1228.9" y="1497" width="2.2" height="110" fill="#e2e2e4"/><rect x="1281.4" y="1497" width="2.2" height="110" fill="#e2e2e4"/><rect x="1346.9" y="1497" width="2.2" height="110" fill="#e2e2e4"/><rect x="1335.4" y="1497" width="2.2" height="110" fill="#b5b5b5"/><circle cx="1177" cy="1496" r="10.5" fill="none" stroke="#54b399" stroke-width="4.4" stroke-linecap="round"/><path d="M1135 1600L1136.5 1564M1150.500 1600L1153.500 1510M1165.500 1584L1167 1578" fill="none" stroke="#54b399" stroke-width="4.4" stroke-linecap="round"/><circle cx="1207" cy="1582" r="10.5" fill="none" stroke="#54b399" stroke-width="4.4" stroke-linecap="round"/><path d="M1198 1594L1212 1598" fill="none" stroke="#54b399" stroke-width="4.4" stroke-linecap="round"/><circle cx="1256" cy="1596" r="10.5" fill="none" stroke="#54b399" stroke-width="4.4" stroke-linecap="round"/><path d="M1281 1564L1286 1554" fill="none" stroke="#54b399" stroke-width="4.4" stroke-linecap="round"/><circle cx="1309.500" cy="1582.500" r="10.5" fill="none" stroke="#54b399" stroke-width="4.4" stroke-linecap="round"/><circle cx="1332.500" cy="1580" r="10.5" fill="none" stroke="#54b399" stroke-width="4.4" stroke-linecap="round"/></svg>
<div style="left:1902.0px;top:372.0px;width:682.0px;height:1044.5px;background:#f5f7fb;border-radius:13px;box-shadow:0 2px 5px rgba(0,0,0,.08),0 10px 26px rgba(0,0,0,.11);overflow:hidden;"><div style="left:0;top:0;width:682.5px;height:229.5px;background:#fff;"></div><div style="left:0;top:228.800px;width:682.5px;height:2.2px;background:#cfd7e6;"></div><div style="left:0;top:458.7px;width:682.5px;height:2.2px;background:#cfd7e6;"></div><div style="left:0;top:813.7px;width:682.5px;height:2.2px;background:#cfd7e6;"></div></div>
<div style="left:1937.0px;top:407.4px;width:523.3px;height:69.2px;background:#fff;border:2px solid #cbd1e1;border-radius:9px;"></div>
<svg style="left:1965.0px;top:430.5px;" width="36.0" height="25.5" viewBox="0 0 30 22"><rect x="0" y="7" width="6" height="15" rx="1" fill="#69707d"/><rect x="8" y="11.5" width="6" height="10.500" rx="1" fill="#54b399"/><rect x="16" y="0" width="6" height="22" rx="1" fill="#69707d"/><rect x="24" y="4" width="6" height="18" rx="1" fill="#54b399"/></svg>
<span class="t" style="left:2018.5px;top:425.9px;font-size:32px;color:#343741;font-weight:700;letter-spacing:-0.53px;">Bar vertical</span>
<svg style="left:2398.0px;top:425.0px;fill:#343741;stroke:#343741;stroke-width:.3;" width="34.0" height="34.0" viewBox="0 0 16 16"><path d="M13.069 5.157 8.384 9.768a.546.546 0 0 1-.768 0L2.93 5.158a.552.552 0 0 0-.771 0 .53.53 0 0 0 0 .759l4.684 4.61c.641.631 1.672.63 2.312 0l4.684-4.61a.53.53 0 0 0 0-.76.552.552 0 0 0-.771 0Z"/></svg>
<svg style="left:2496.0px;top:436.5px;" width="36.0" height="11.0" viewBox="0 0 36 11"><g fill="none" stroke="#343741" stroke-width="2.2"><rect x="1.2" y="1.5" width="7.6" height="7.6"/><rect x="14.2" y="1.5" width="7.6" height="7.6"/><rect x="27.2" y="1.5" width="7.6" height="7.6"/></g></svg>
<div style="left:1937.0px;top:495.3px;width:611.5px;height:69.2px;background:#fff;border:2px solid #cbd1e1;border-radius:9px;"></div>
<span class="t" style="left:1965.5px;top:513.9px;font-size:32px;color:#343741;letter-spacing:0.44px;">earthquakes</span>
<svg style="left:2485.5px;top:513.5px;fill:#343741;stroke:#343741;stroke-width:.3;" width="34.0" height="34.0" viewBox="0 0 16 16"><path d="M13.069 5.157 8.384 9.768a.546.546 0 0 1-.768 0L2.93 5.158a.552.552 0 0 0-.771 0 .53.53 0 0 0 0 .759l4.684 4.61c.641.631 1.672.63 2.312 0l4.684-4.61a.53.53 0 0 0 0-.76.552.552 0 0 0-.771 0Z"/></svg>
<span class="t" style="left:1937.5px;top:642.6px;font-size:27px;color:#1a1c21;font-weight:700;letter-spacing:-0.29px;">Horizontal axis</span>
<span class="t" style="left:2445.0px;top:642.6px;font-size:27px;color:#69707d;letter-spacing:0.42px;">Optional</span>
<div class=fld style="left:1937.0px;top:708.5px;width:612.0px;height:87.5px;"></div>
<span class="t" style="left:1956.5px;top:734.9px;font-size:32px;color:#006bb8;letter-spacing:0.16px;">@timestamp</span>
<svg style="left:2489.5px;top:744.0px;" width="17.0" height="17.0" viewBox="0 0 17 17"><path d="M1.5 1.5l14 14M15.5 1.5l-14 14" fill="none" stroke="#c4362c" stroke-width="1.6" stroke-linecap="round"/></svg>
<span class="t" style="left:1937.5px;top:873.1px;font-size:27px;color:#1a1c21;font-weight:700;letter-spacing:-0.09px;">Vertical axis</span>
<div class=fld style="left:1937.0px;top:939.7px;width:612.0px;height:87.0px;"></div>
<div style="left:1960.0px;top:973.5px;width:20.0px;height:19.5px;background:#54b399;border-radius:4px;"></div>
<span class="t" style="left:2001.0px;top:964.9px;font-size:32px;color:#006bb8;letter-spacing:0.36px;">Median of mag</span>
<svg style="left:2489.0px;top:974.5px;" width="17.0" height="17.0" viewBox="0 0 17 17"><path d="M1.5 1.5l14 14M15.5 1.5l-14 14" fill="none" stroke="#c4362c" stroke-width="1.6" stroke-linecap="round"/></svg>
<div style="left:1925.9px;top:915.8px;width:627.8px;height:134.0px;border:10.5px solid #f94a87;box-shadow:-2px 5px 7px rgba(0,0,0,.55), inset -1px 3px 5px rgba(0,0,0,.45);"></div>
<div style="left:1937.2px;top:1062.0px;width:611.5px;height:87.5px;border:2px dashed #d0d7e5;border-radius:13px;"></div>
<svg style="left:1957.0px;top:1089.0px;fill:#69707d;" width="33.0" height="33.0" viewBox="0 0 16 16"><path d="M8 0a8 8 0 1 1 0 16A8 8 0 0 1 8 0Zm0 3.5a.5.5 0 0 0-.5.5v3.5H4a.5.5 0 0 0 0 1h3.5V12a.5.5 0 1 0 1 0V8.5H12a.5.5 0 1 0 0-1H8.5V4a.5.5 0 0 0-.5-.5Z"/></svg>
<span class="t" style="left:2010.0px;top:1089.4px;font-size:32px;color:#69707d;letter-spacing:0.68px;">Add or drag-and-drop a field</span>
<span class="t" style="left:1937.5px;top:1227.6px;font-size:27px;color:#1a1c21;font-weight:700;letter-spacing:-0.57px;">Breakdown</span>
<span class="t" style="left:2445.0px;top:1227.6px;font-size:27px;color:#69707d;letter-spacing:0.42px;">Optional</span>
<div style="left:1937.2px;top:1293.3px;width:611.5px;height:87.5px;border:2px dashed #d0d7e5;border-radius:13px;"></div>
<svg style="left:1957.0px;top:1320.3px;fill:#69707d;" width="33.0" height="33.0" viewBox="0 0 16 16"><path d="M8 0a8 8 0 1 1 0 16A8 8 0 0 1 8 0Zm0 3.5a.5.5 0 0 0-.5.5v3.5H4a.5.5 0 0 0 0 1h3.5V12a.5.5 0 1 0 1 0V8.5H12a.5.5 0 1 0 0-1H8.5V4a.5.5 0 0 0-.5-.5Z"/></svg>
<span class="t" style="left:2010.0px;top:1320.7px;font-size:32px;color:#69707d;letter-spacing:0.68px;">Add or drag-and-drop a field</span>
<div style="left:1902.0px;top:1452.0px;width:682.0px;height:88.0px;background:#69707d;border-radius:13px;"></div>
<svg style="left:2148.0px;top:1479.0px;" width="31.0" height="32.0" viewBox="0 0 16 16.500"><g fill="none" stroke="#fff" stroke-width="1.05" stroke-linejoin="round" stroke-linecap="round"><path d="M8 1.200 14.600 4.700 8 8.200 1.400 4.700z"/><path d="M1.400 8.200 8 11.700l6.600-3.500M1.400 11.700 8 15.200l6.600-3.500"/></g></svg>
<span class="t" style="left:2200.5px;top:1478.9px;font-size:32px;color:#fff;letter-spacing:0.35px;-webkit-text-stroke:1.0px #fff;">Add layer</span>
<div style="left:2632.0px;top:350.0px;width:9.0px;height:1222.0px;background:#acb0bd;border-radius:5px;"></div>
<div style="left:2652.0px;top:0.0px;width:2.0px;height:105.0px;background:#4f525a;"></div>
<div style="left:0.0px;top:0.0px;width:2.0px;height:105.0px;background:#4a4d55;"></div>
<div style="left:0.0px;top:106.0px;width:2.0px;height:1492.0px;background:rgba(0,0,0,.05);z-index:9;"></div>
</div></body></html>
